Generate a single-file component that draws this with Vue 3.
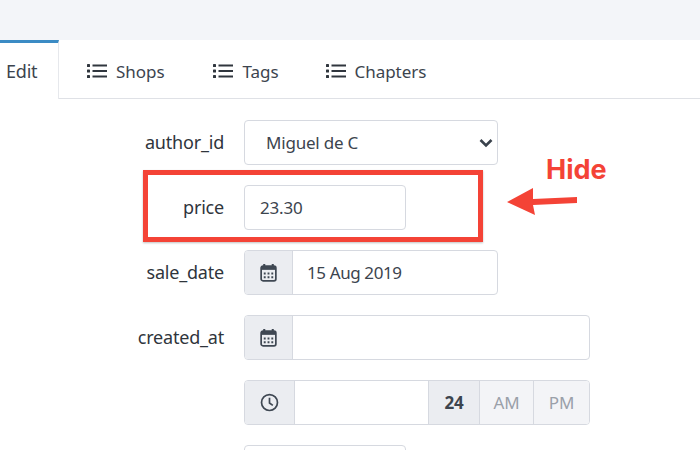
<script setup>
const tabs = ['Shops', 'Tags', 'Chapters']
</script>

<template>
  <div class="page">
    <div class="topbar"></div>
    <nav class="tabs">
      <div class="tab active">Edit</div>
      <div v-for="t in tabs" :key="t" class="tab" :class="'t-' + t">
        <svg class="list" viewBox="0 0 20 16" width="20" height="16">
          <rect x="0" y="1" width="3" height="3" rx=".6" />
          <rect x="0" y="6.5" width="3" height="3" rx=".6" />
          <rect x="0" y="12" width="3" height="3" rx=".6" />
          <rect x="5.5" y="1.5" width="14.5" height="2" />
          <rect x="5.5" y="7" width="14.5" height="2" />
          <rect x="5.5" y="12.500" width="14.5" height="2" />
        </svg>
        <span>{{ t }}</span>
      </div>
    </nav>

    <form class="form" @submit.prevent>
      <div class="row">
        <label class="lab">author_id</label>
        <div class="select w-md">
          <span>Miguel de C</span>
          <svg viewBox="0 0 14 10" width="14" height="10"><path d="M1.500 2 7 7.500 12.500 2" fill="none" stroke="#3a424c" stroke-width="2.600" /></svg>
        </div>
      </div>
      <div class="row">
        <label class="lab">price</label>
        <div class="input w-sm">23.30</div>
      </div>
      <div class="row">
        <label class="lab">sale_date</label>
        <div class="group w-md">
          <div class="addon">
            <svg viewBox="0 0 18 20" width="17" height="19" class="ico">
              <path d="M4.500 1v3M13.500 1v3" stroke="#3f4853" stroke-width="2.200" fill="none" />
              <rect x="1.200" y="3.200" width="15.600" height="15.600" rx="2" fill="none" stroke="#3f4853" stroke-width="1.800" />
              <rect x="1.200" y="3.200" width="15.600" height="4" fill="#3f4853" />
              <path d="M4 10h2v2H4zM8 10h2v2H8zM12 10h2v2h-2zM4 14h2v2H4zM8 14h2v2H8zM12 14h2v2h-2z" fill="#3f4853" />
            </svg>
          </div>
          <div class="field">15 Aug 2019</div>
        </div>
      </div>
      <div class="row">
        <label class="lab">created_at</label>
        <div class="group w-lg">
          <div class="addon">
            <svg viewBox="0 0 18 20" width="17" height="19" class="ico">
              <path d="M4.500 1v3M13.500 1v3" stroke="#3f4853" stroke-width="2.200" fill="none" />
              <rect x="1.200" y="3.200" width="15.600" height="15.600" rx="2" fill="none" stroke="#3f4853" stroke-width="1.800" />
              <rect x="1.200" y="3.200" width="15.600" height="4" fill="#3f4853" />
              <path d="M4 10h2v2H4zM8 10h2v2H8zM12 10h2v2h-2zM4 14h2v2H4zM8 14h2v2H8zM12 14h2v2h-2z" fill="#3f4853" />
            </svg>
          </div>
          <div class="field"></div>
        </div>
      </div>
      <div class="row">
        <label class="lab"></label>
        <div class="group w-lg tall">
          <div class="addon clock">
            <svg viewBox="0 0 20 20" width="19" height="19">
              <circle cx="10" cy="10" r="8.400" fill="none" stroke="#3f4853" stroke-width="1.800" />
              <path d="M10 5v5.500l3.500 2.500" fill="none" stroke="#3f4853" stroke-width="1.800" />
            </svg>
          </div>
          <div class="field"></div>
          <div class="seg on">24</div>
          <div class="seg am">AM</div>
          <div class="seg pm">PM</div>
        </div>
      </div>
      <div class="row">
        <label class="lab"></label>
        <div class="input w-sm"></div>
      </div>
    </form>

    <div class="redbox"></div>
    <svg class="arrow" viewBox="0 0 74 30" width="74" height="30">
      <path d="M1 16 27 2 27 13 71 11 71 17 27 19 29 29Z" fill="#f44336" />
    </svg>
    <div class="hide">Hide</div>
  </div>
</template>

<style scoped>
.page {
  position: relative;
  width: 700px;
  height: 450px;
  overflow: hidden;
  background: #fff;
  font-family: "Noto Sans", "Open Sans", sans-serif;
  font-size: 17px;
  color: #3c444e;
  letter-spacing: -0.2px;
}
.topbar {
  height: 40px;
  background: #f3f5f9;
}
.tabs {
  display: flex;
  height: 59px;
  box-sizing: border-box;
  border-bottom: 1px solid #dfe1e6;
  letter-spacing: -0.05px;
}
.tab {
  display: flex;
  align-items: center;
  gap: 9px;
  padding-top: 4px;
  color: #3c444e;
}
.tab.active {
  width: 59px;
  height: 59px;
  box-sizing: border-box;
  padding: 0 0 0 6px;
  border-top: 3px solid #3b8bc4;
  border-right: 1px solid #e6e8ec;
  background: #fff;
  font-size: 18px;
  letter-spacing: -0.2px;
}
.t-Shops { margin-left: 28px; }
.t-Tags { margin-left: 49px; }
.t-Chapters { margin-left: 47px; }
.list { fill: #30363e; }
.form {
  display: flex;
  flex-direction: column;
  gap: 20px;
  padding-top: 21px;
}
.row {
  display: flex;
  align-items: center;
  gap: 20px;
}
.lab {
  width: 224px;
  padding-bottom: 2px;
  text-align: right;
  color: #2f353c;
  font-size: 18px;
  letter-spacing: -0.2px;
}
.w-sm { width: 162px; }
.w-md { width: 254px; }
.w-lg { width: 346px; }
.select, .input, .group {
  box-sizing: border-box;
  height: 45px;
  border: 1.500px solid #d6d9e0;
  border-radius: 4px;
  background: #fff;
}
.select {
  display: flex;
  align-items: center;
  justify-content: space-between;
  padding: 0 4px 0 21px;
}
.input {
  display: flex;
  align-items: center;
  padding-left: 15px;
}
.group {
  display: flex;
  overflow: hidden;
}
.addon {
  flex: none;
  width: 48px;
  box-sizing: border-box;
  display: flex;
  align-items: center;
  justify-content: center;
  background: #ebedf1;
  border-right: 1.500px solid #d6d9e0;
}
.clock { width: 50px; }
.field {
  flex: 1;
  display: flex;
  align-items: center;
  padding-left: 14px;
  letter-spacing: -0.4px;
}
.seg {
  flex: none;
  display: flex;
  align-items: center;
  justify-content: center;
  box-sizing: border-box;
  background: #f3f4f7;
  color: #9aa0a9;
  border-left: 1.500px solid #d6d9e0;
}
.seg.on {
  width: 51px;
  background: #ebedf1;
  color: #3c444e;
  font-weight: 700;
}
.seg.am { width: 54px; }
.seg.pm { width: 56px; }
.redbox {
  position: absolute;
  left: 143px;
  top: 170px;
  width: 340px;
  height: 72px;
  box-sizing: border-box;
  border: 5px solid #f44336;
  box-shadow: 0 1px 2px rgba(0, 0, 0, .25);
}
.arrow {
  position: absolute;
  left: 506px;
  top: 186px;
}
.hide {
  position: absolute;
  left: 546px;
  top: 153px;
  font-family: Inter, "Liberation Sans", sans-serif;
  font-weight: 700;
  font-size: 27px;
  letter-spacing: 0;
  color: #f44336;
}
</style>
